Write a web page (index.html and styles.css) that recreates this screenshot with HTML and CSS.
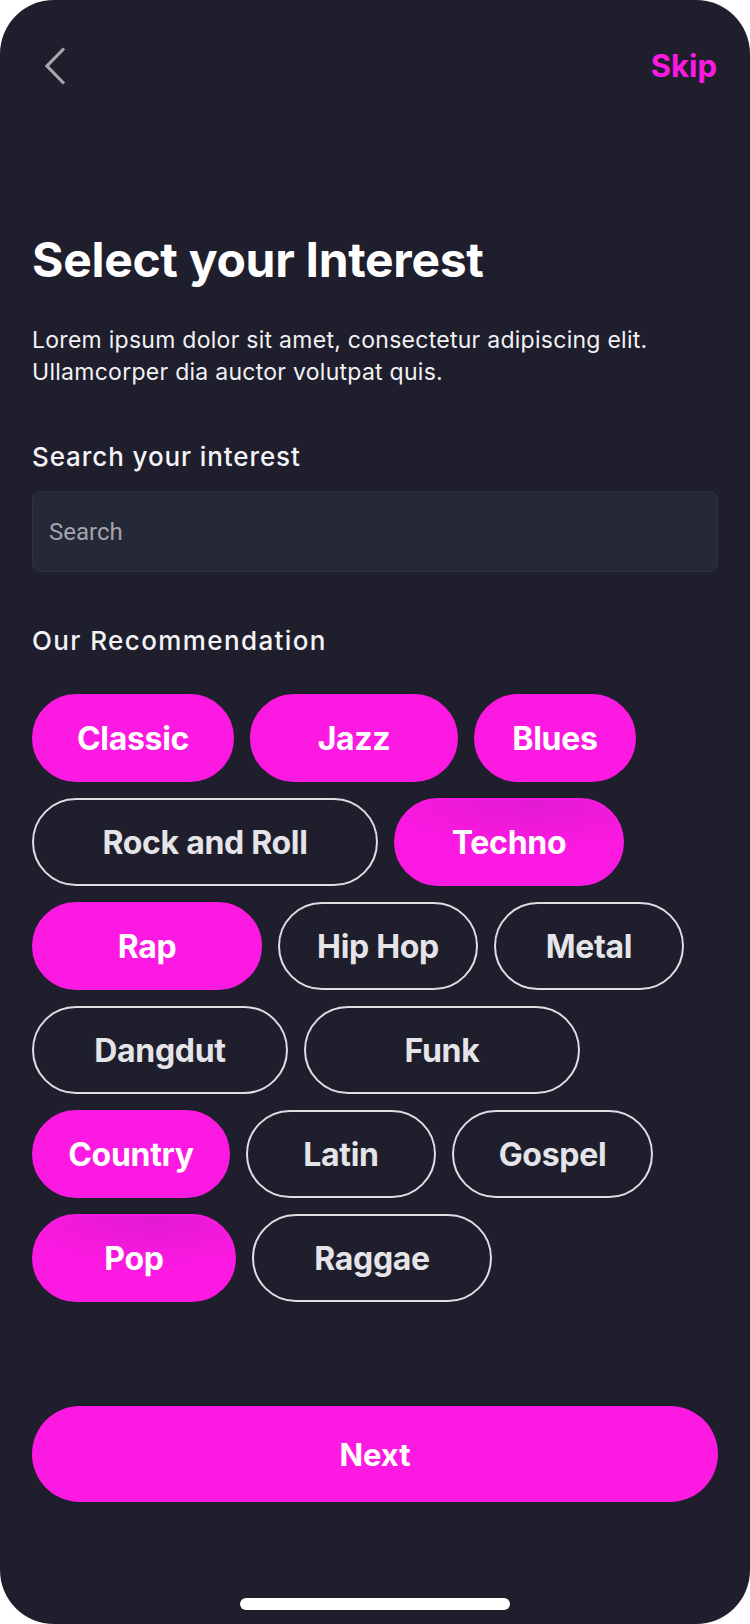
FILE: index.html
```html
<!DOCTYPE html>
<html lang="en">
<head>
<meta charset="utf-8">
<title>Select your Interest</title>
<link rel="stylesheet" href="styles.css">
</head>
<body>
<div class="screen">
  <header class="topbar">
    <button class="back" aria-label="Back">
      <svg width="22" height="38" viewBox="0 0 22 38" fill="none">
        <polyline points="20,1.5 3,19 20,36.5" stroke="#a7a7ae" stroke-width="3.2" stroke-linecap="butt" stroke-linejoin="miter"/>
      </svg>
    </button>
    <a class="skip" href="#">Skip</a>
  </header>

  <main class="content">
    <h1 class="title">Select your Interest</h1>
    <p class="lead">Lorem ipsum dolor sit amet, consectetur adipiscing elit.<br>Ullamcorper dia auctor volutpat quis.</p>

    <h2 class="label label-search">Search your interest</h2>
    <div class="search"><span class="placeholder">Search</span></div>

    <h2 class="label label-rec">Our Recommendation</h2>
    <div class="chips">
      <span class="chip on w-classic">Classic</span>
      <span class="chip on w-jazz">Jazz</span>
      <span class="chip on w-blues">Blues</span>
      <span class="chip w-rock">Rock and Roll</span>
      <span class="chip on glow w-techno">Techno</span>
      <span class="chip on w-rap">Rap</span>
      <span class="chip w-hiphop">Hip Hop</span>
      <span class="chip w-metal">Metal</span>
      <span class="chip w-dangdut">Dangdut</span>
      <span class="chip w-funk">Funk</span>
      <span class="chip on w-country">Country</span>
      <span class="chip w-latin">Latin</span>
      <span class="chip w-gospel">Gospel</span>
      <span class="chip on glow w-pop">Pop</span>
      <span class="chip w-raggae">Raggae</span>
    </div>

    <button class="next">Next</button>
  </main>

  <div class="home-indicator"></div>
</div>
</body>
</html>
```

FILE: styles.css
```css
* { box-sizing: border-box; }

html, body {
  margin: 0;
  padding: 0;
  background: #ffffff;
}

.screen {
  width: 750px;
  height: 1624px;
  background: #1f1e2c;
  border-radius: 54px;
  overflow: hidden;
  display: flex;
  flex-direction: column;
  font-family: "Inter", "Noto Sans", sans-serif;
  color: #ffffff;
}

.topbar {
  display: flex;
  justify-content: space-between;
  align-items: center;
  height: 35px;
  margin-top: 48px;
  padding: 0 33px 0 44px;
}

.back {
  background: none;
  border: 0;
  padding: 0;
  width: 22px;
  height: 38px;
  display: flex;
}

.skip {
  color: #fc19e1;
  font-size: 31px;
  font-weight: 700;
  text-decoration: none;
  letter-spacing: 0;
}

.content {
  padding: 0 32px;
  display: flex;
  flex-direction: column;
}

.title {
  margin: 149px 0 0;
  font-size: 48px;
  line-height: 56px;
  font-weight: 700;
  letter-spacing: -0.3px;
}

.lead {
  margin: 36px 0 0;
  font-size: 23px;
  line-height: 32px;
  font-weight: 400;
  letter-spacing: 0.27px;
  color: #f2f2f5;
}

.label {
  margin: 0;
  font-size: 26px;
  line-height: 32px;
  font-weight: 500;
  letter-spacing: 0.9px;
  color: #f4f4f7;
}

.label-search { margin-top: 53px; }

.search {
  margin-top: 18px;
  height: 81px;
  background: #252837;
  border: 1.5px solid #2d3042;
  border-radius: 8px;
  display: flex;
  align-items: center;
  padding: 0 16px;
}

.placeholder {
  font-family: "Roboto", sans-serif;
  font-size: 24px;
  color: #a3a4ab;
}

.label-rec {
  margin-top: 53px;
  letter-spacing: 1.4px;
}

.chips {
  margin-top: 37px;
  display: flex;
  flex-wrap: wrap;
  gap: 16px;
}

.chip {
  height: 88px;
  border-radius: 44px;
  border: 2px solid #dedee2;
  color: #e4e4e9;
  font-size: 32px;
  font-weight: 700;
  display: flex;
  align-items: center;
  justify-content: center;
  letter-spacing: -0.3px;
}

.chip.on {
  background: #fc19e1;
  border-color: #fc19e1;
  color: #ffffff;
}

.chip.glow {
  background: radial-gradient(ellipse 70% 60% at 60% 0%, #e21ad2 0%, #fc19e1 100%);
}

.w-classic { width: 202px; }
.w-jazz { width: 208px; }
.w-blues { width: 162px; }
.w-rock { width: 346px; }
.w-techno { width: 230px; }
.w-rap { width: 230px; }
.w-hiphop { width: 200px; }
.w-metal { width: 190px; }
.w-dangdut { width: 256px; }
.w-funk { width: 276px; }
.w-country { width: 198px; }
.w-latin { width: 190px; }
.w-gospel { width: 201px; }
.w-pop { width: 204px; }
.w-raggae { width: 240px; }

.next {
  margin-top: 104px;
  height: 96px;
  border: 0;
  border-radius: 48px;
  background: #fc19e1;
  color: #ffffff;
  font-family: "Inter", "Noto Sans", sans-serif;
  font-size: 31px;
  font-weight: 700;
  letter-spacing: 0;
}

.home-indicator {
  width: 270px;
  height: 12px;
  border-radius: 6px;
  background: #ffffff;
  margin: 96px auto 0;
}
```
